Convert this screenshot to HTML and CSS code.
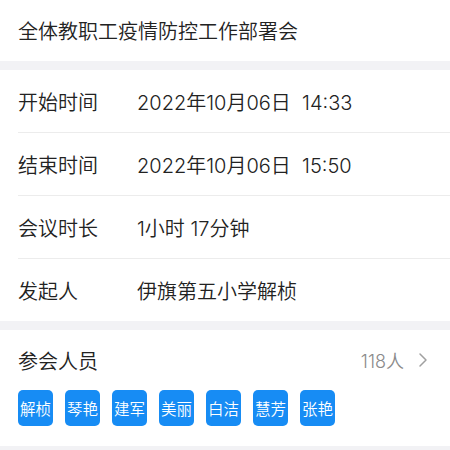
FILE: index.html
```html
<!DOCTYPE html>
<html lang="zh-CN">
<head>
    <meta charset="UTF-8">
    <meta name="viewport" content="width=device-width, initial-scale=1.0">
    <title>会议详情</title>
    <link rel="stylesheet" href="styles.css">
</head>
<body>
    <div class="section title-section">
        <div class="meeting-title">全体教职工疫情防控工作部署会</div>
    </div>

    <div class="section">
        <div class="row">
            <span class="label">开始时间</span>
            <span class="value">2022年10月06日&nbsp; 14:33</span>
        </div>
        <div class="row">
            <span class="label">结束时间</span>
            <span class="value">2022年10月06日&nbsp; 15:50</span>
        </div>
        <div class="row">
            <span class="label">会议时长</span>
            <span class="value">1小时 17分钟</span>
        </div>
        <div class="row">
            <span class="label">发起人</span>
            <span class="value">伊旗第五小学解桢</span>
        </div>
    </div>

    <div class="section members">
        <div class="members-head">
            <span class="label">参会人员</span>
            <span class="count">118人
                <svg class="chevron" width="10" height="16" viewBox="0 0 10 16">
                    <path d="M2 2 L8 8 L2 14" fill="none" stroke="#a0a0a0" stroke-width="1.5" stroke-linecap="round" stroke-linejoin="round"/>
                </svg>
            </span>
        </div>
        <div class="chips">
            <span class="chip">解桢</span>
            <span class="chip">琴艳</span>
            <span class="chip">建军</span>
            <span class="chip">美丽</span>
            <span class="chip">白洁</span>
            <span class="chip">慧芳</span>
            <span class="chip">张艳</span>
        </div>
    </div>
</body>
</html>
```

FILE: styles.css
```css
body {
    margin: 0;
    background-color: #f2f2f5;
    font-family: Inter, "Noto Sans CJK SC", sans-serif;
    font-weight: 350;
    color: #222222;
}

.section {
    background-color: #ffffff;
    margin-bottom: 9px;
}

.title-section {
    height: 61px;
    padding-left: 18px;
    display: flex;
    align-items: center;
}

.meeting-title {
    font-size: 20px;
}

.row {
    display: flex;
    align-items: center;
    height: 62px;
    margin-left: 18px;
    border-bottom: 1px solid #ececec;
    font-size: 20px;
}

.row:last-child {
    border-bottom: none;
}

.label {
    width: 119px;
    font-size: 20px;
}

.value {
    font-size: 20px;
}

.members {
    padding: 0 22px 20px 18px;
}

.members-head {
    display: flex;
    align-items: center;
    justify-content: space-between;
    height: 60px;
}

.count {
    display: flex;
    align-items: center;
    gap: 14px;
    color: #8a8a8a;
    font-size: 18px;
}

.chips {
    display: flex;
    gap: 12px;
}

.chip {
    width: 35px;
    height: 36px;
    border-radius: 5px;
    background-color: #178cf4;
    color: #ffffff;
    font-size: 15.5px;
    display: flex;
    align-items: center;
    justify-content: center;
}
```
